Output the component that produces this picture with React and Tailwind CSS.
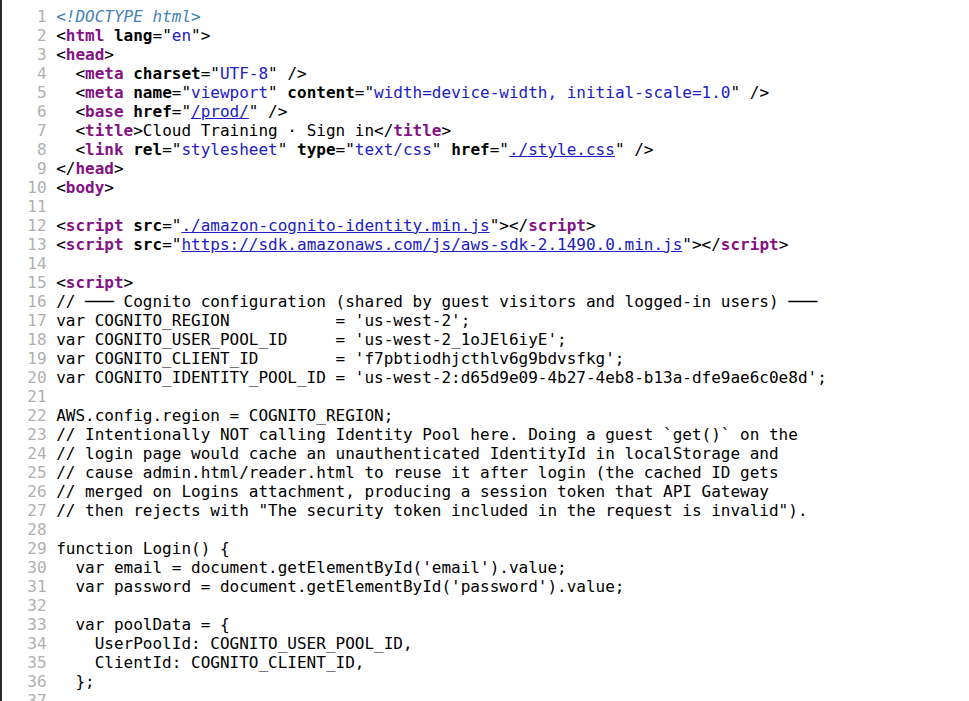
import React from "react";

const T = (s) => ({ k: "t", s });
const G = (s) => ({ k: "tag", s });
const N = (s) => ({ k: "an", s });
const V = (s) => ({ k: "av", s });
const L = (s) => ({ k: "link", s });
const D = (s) => ({ k: "doc", s });

const lines = [
  [D("<!DOCTYPE html>")],
  [T("<"), G("html"), T(" "), N("lang"), T('="'), V("en"), T('">')],
  [T("<"), G("head"), T(">")],
  [T("  <"), G("meta"), T(" "), N("charset"), T('="'), V("UTF-8"), T('" />')],
  [T("  <"), G("meta"), T(" "), N("name"), T('="'), V("viewport"), T('" '), N("content"), T('="'), V("width=device-width, initial-scale=1.0"), T('" />')],
  [T("  <"), G("base"), T(" "), N("href"), T('="'), L("/prod/"), T('" />')],
  [T("  <"), G("title"), T(">Cloud Training · Sign in</"), G("title"), T(">")],
  [T("  <"), G("link"), T(" "), N("rel"), T('="'), V("stylesheet"), T('" '), N("type"), T('="'), V("text/css"), T('" '), N("href"), T('="'), L("./style.css"), T('" />')],
  [T("</"), G("head"), T(">")],
  [T("<"), G("body"), T(">")],
  [],
  [T("<"), G("script"), T(" "), N("src"), T('="'), L("./amazon-cognito-identity.min.js"), T('"></'), G("script"), T(">")],
  [T("<"), G("script"), T(" "), N("src"), T('="'), L("https://sdk.amazonaws.com/js/aws-sdk-2.1490.0.min.js"), T('"></'), G("script"), T(">")],
  [],
  [T("<"), G("script"), T(">")],
  [T("// ─── Cognito configuration (shared by guest visitors and logged-in users) ───")],
  [T("var COGNITO_REGION           = 'us-west-2';")],
  [T("var COGNITO_USER_POOL_ID     = 'us-west-2_1oJEl6iyE';")],
  [T("var COGNITO_CLIENT_ID        = 'f7pbtiodhjcthlv6g9bdvsfkg';")],
  [T("var COGNITO_IDENTITY_POOL_ID = 'us-west-2:d65d9e09-4b27-4eb8-b13a-dfe9ae6c0e8d';")],
  [],
  [T("AWS.config.region = COGNITO_REGION;")],
  [T("// Intentionally NOT calling Identity Pool here. Doing a guest `get()` on the")],
  [T("// login page would cache an unauthenticated IdentityId in localStorage and")],
  [T("// cause admin.html/reader.html to reuse it after login (the cached ID gets")],
  [T("// merged on Logins attachment, producing a session token that API Gateway")],
  [T('// then rejects with "The security token included in the request is invalid").')],
  [],
  [T("function Login() {")],
  [T("  var email = document.getElementById('email').value;")],
  [T("  var password = document.getElementById('password').value;")],
  [],
  [T("  var poolData = {")],
  [T("    UserPoolId: COGNITO_USER_POOL_ID,")],
  [T("    ClientId: COGNITO_CLIENT_ID,")],
  [T("  };")],
  [],
];

function Seg({ seg }) {
  switch (seg.k) {
    case "tag":
      return <span className="font-bold text-[#841284]">{seg.s}</span>;
    case "an":
      return <span className="font-bold text-black">{seg.s}</span>;
    case "av":
      return <span className="text-[#2020c4]">{seg.s}</span>;
    case "link":
      return <span className="text-[#2020c4] underline">{seg.s}</span>;
    case "doc":
      return <span className="italic text-[#4682b4]">{seg.s}</span>;
    default:
      return <span>{seg.s}</span>;
  }
}

export default function App() {
  return (
    <div className="min-h-screen overflow-hidden border-l-2 border-[#2a2a2a] bg-white pl-[6px] pt-[7px] font-['DejaVu_Sans_Mono',monospace] text-[16px] leading-[19px] text-black">
      {lines.map((segs, i) => (
        <div key={i} className="flex whitespace-pre">
          <span className="mr-[1ch] w-[4ch] shrink-0 text-right text-[#b0b0b0]">{i + 1}</span>
          <span>
            {segs.map((s, j) => (
              <Seg key={j} seg={s} />
            ))}
          </span>
        </div>
      ))}
    </div>
  );
}
